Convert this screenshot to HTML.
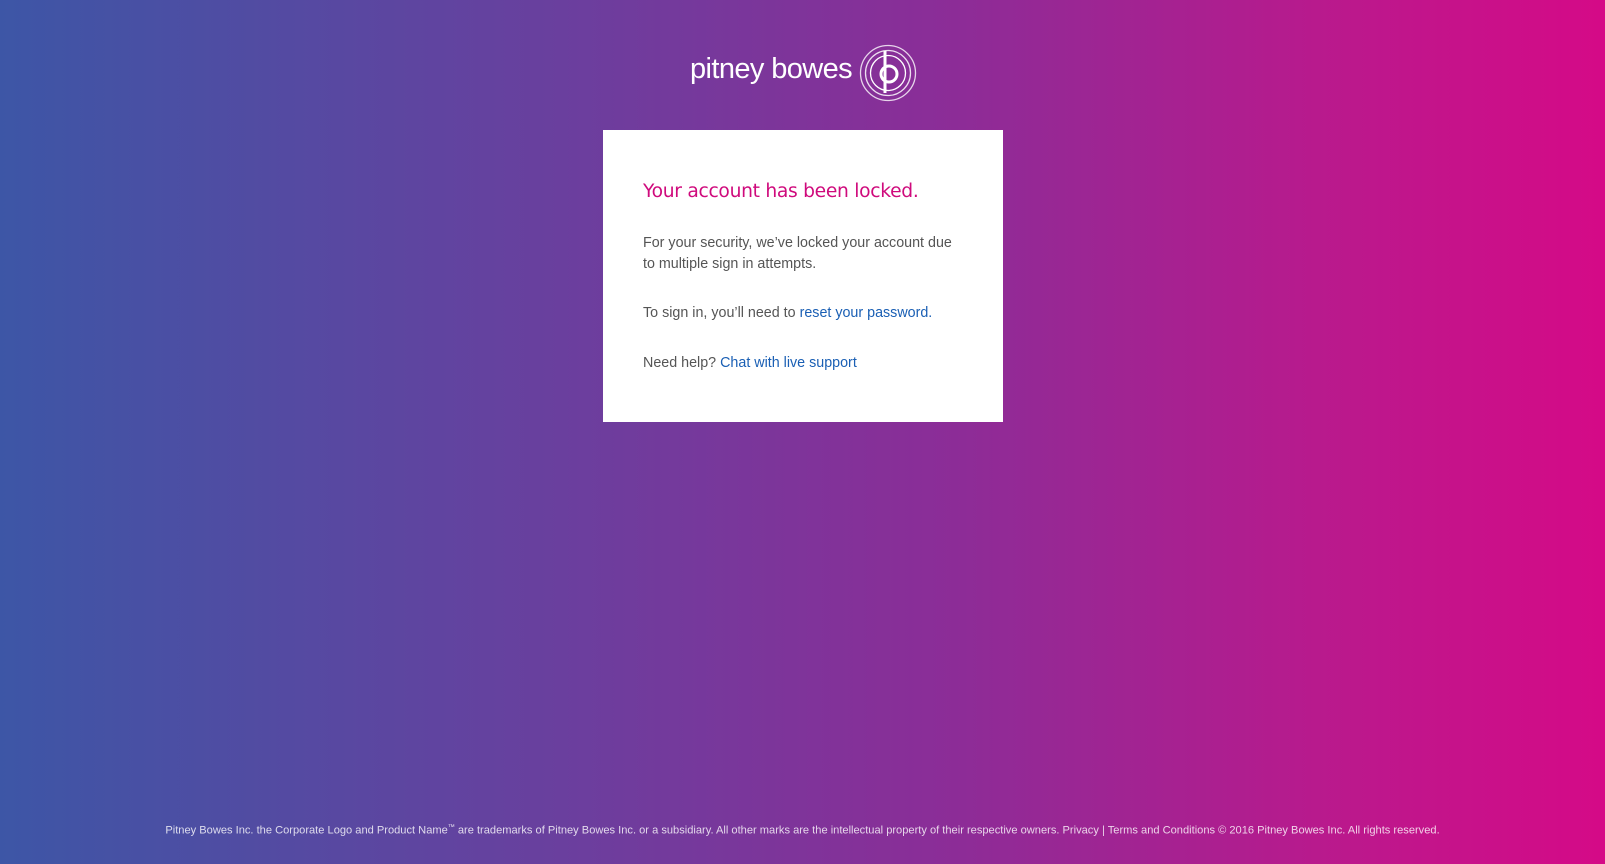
<!DOCTYPE html>
<html><head><meta charset="utf-8"><style>
html,body{margin:0;padding:0;width:1605px;height:864px;overflow:hidden}
body{background:linear-gradient(90deg,#3d56a6 0%,#6a3f9e 35%,#8d2c97 60%,#b81a8d 82%,#d50a87 100%);font-family:"Liberation Sans",sans-serif;position:relative}
.logo{position:absolute;left:690px;top:53px;color:#fff;font-size:29px;letter-spacing:-0.6px;font-family:"Liberation Sans",sans-serif;white-space:nowrap}
.card{position:absolute;left:603px;top:130px;width:400px;height:292px;background:#fff}
.card .in{position:absolute;left:40px;top:0;right:20px}
h1{position:absolute;top:51px;margin:0;font-weight:normal;font-size:18.7px;color:#cf0a7c;font-family:"DejaVu Sans","Liberation Sans",sans-serif;letter-spacing:-0.3px;white-space:nowrap}
p{position:absolute;margin:0;font-size:14.3px;line-height:20.5px;color:#555;white-space:nowrap}
a{color:#1a5fb4;text-decoration:none}
.foot{position:absolute;left:0;right:0;top:824px;text-align:center;font-size:11.1px;color:rgba(255,255,255,.8)}
</style></head><body>
<div class="logo">pitney bowes</div>
<svg style="position:absolute;left:858px;top:43px" width="60" height="60" viewBox="0 0 60 60" fill="none" stroke="#fff">
<circle cx="30" cy="30" r="27.5" stroke-width="1.3" opacity=".8"/>
<circle cx="30" cy="30" r="22.5" stroke-width="1.3" opacity=".85"/>
<circle cx="30" cy="30" r="17.5" stroke-width="1.3"/>
<path d="M27 8 V50" stroke-width="3"/>
<circle cx="31" cy="31" r="8" stroke-width="3"/>
</svg>
<div class="card"><div class="in">
<h1>Your account has been locked.</h1>
<p style="top:103px">For your security, we’ve locked your account due<br>to multiple sign in attempts.</p>
<p style="top:173px">To sign in, you’ll need to <a>reset your password.</a></p>
<p style="top:223px">Need help? <a>Chat with live support</a></p>
</div></div>
<div class="foot">Pitney Bowes Inc. the Corporate Logo and Product Name<sup style="font-size:7px">™</sup> are trademarks of Pitney Bowes Inc. or a subsidiary. All other marks are the intellectual property of their respective owners. Privacy | Terms and Conditions © 2016 Pitney Bowes Inc. All rights reserved.</div>
</body></html>
